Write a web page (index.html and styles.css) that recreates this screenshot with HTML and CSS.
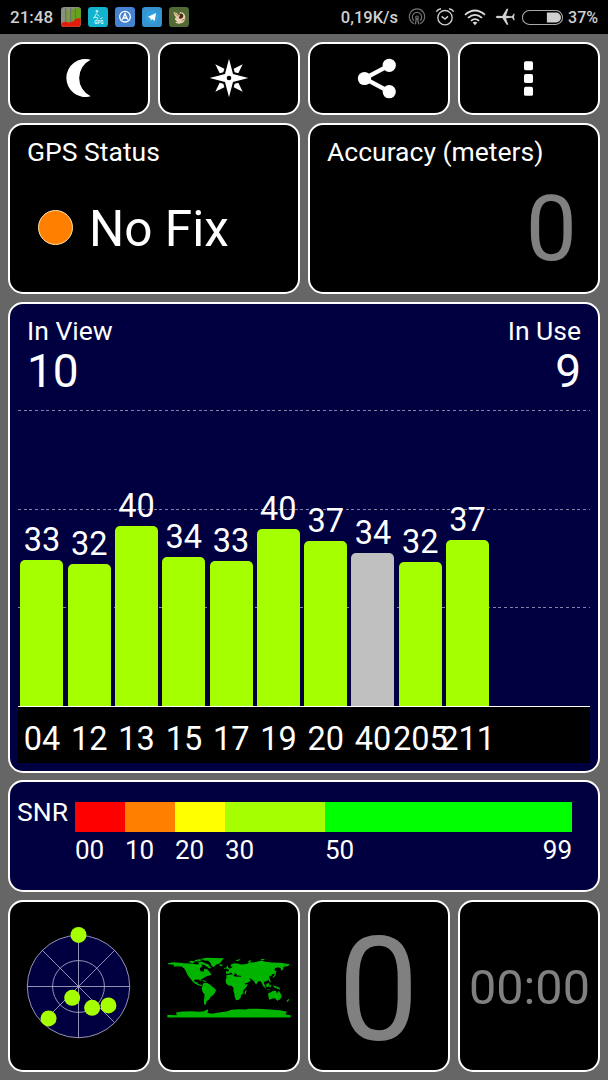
FILE: index.html
```
<!DOCTYPE html>
<html lang="en">
<head>
  <meta charset="UTF-8">
  <meta name="viewport" content="width=device-width, initial-scale=1.0">
  <title>GPS Test</title>
  <link rel="stylesheet" href="styles.css">
</head>
<body>
  <div class="status-bar">
    <div class="status-left">
      <span class="clock">21:48</span>
      <svg class="app-icon" viewBox="0 0 60 60">
        <rect width="60" height="60" rx="10" fill="#8a8f84"/>
        <path d="M15 12h13v38H15z" fill="#7c9a4a"/>
        <path d="M30 6h12v44H30z" fill="#6f9c2c"/>
        <path d="M44 2h8q8 0 8 8v34H44z" fill="#62a31c"/>
        <path d="M14 3v48M29 3v48M43 3v48" stroke="#55614a" stroke-width="2"/>
        <path d="M1 48l12-4 12 3 14-5 4-7 16-1v16q0 9-9 9H10q-8 0-9-8z" fill="#e31b0c"/>
      </svg>
      <svg class="app-icon" viewBox="0 0 60 60">
        <rect width="60" height="60" rx="10" fill="#12b3cf"/>
        <circle cx="27" cy="13" r="4" fill="#bdeef5"/>
        <path d="M25 19l-5 11 10 3-4 7M25 20l9 8M15 34l8-4M36 36l8-4" fill="none" stroke="#bdeef5" stroke-width="3"/>
        <text x="19" y="52" class="tiny-text">GPS</text>
      </svg>
      <svg class="app-icon" viewBox="0 0 60 60">
        <rect width="60" height="60" rx="10" fill="#4583d2"/>
        <circle cx="30" cy="29" r="16" fill="none" stroke="#fff" stroke-width="4"/>
        <path d="M22 38l8-18 8 18M24 33h12" fill="none" stroke="#fff" stroke-width="4"/>
      </svg>
      <svg class="app-icon" viewBox="0 0 60 60">
        <rect width="60" height="60" rx="10" fill="#3693d0"/>
        <circle cx="30" cy="30" r="20" fill="#2f9fe0"/>
        <path d="M17 30l25-12-4 24-8-6-4 5-1-8z" fill="#fff"/>
      </svg>
      <svg class="app-icon" viewBox="0 0 60 60">
        <rect width="60" height="60" rx="10" fill="#526b35"/>
        <path d="M13 15l9 2 8 9 3-10q14-1 16 15 0 14-12 18-12 3-19-3l8-2q-9-3-8-12l5 2q-8-8-10-19z" fill="#e9d3b4"/>
        <path d="M32 20q10-3 11 6-1 10-11 9-5-3 0-8z" fill="#4a2c1c"/>
        <path d="M16 17l11 11M38 42l9-7" stroke="#c06a2a" stroke-width="3"/>
      </svg>
    </div>
    <div class="status-right">
      <span class="speed">0,19K/s</span>
      <svg class="icon-hotspot" viewBox="0 0 54 54" fill="none" stroke="#707070" stroke-width="3.5">
        <path d="M18 47A23 23 0 1 1 36 47M18 38A14 14 0 1 1 36 38"/>
        <path d="M22 49l3-17h4l3 17" stroke-width="4"/>
        <circle cx="27" cy="28" r="4"/>
      </svg>
      <svg class="icon-alarm" viewBox="0 0 60 60" fill="none" stroke="#d0d0d0" stroke-width="4">
        <circle cx="30" cy="32" r="21.500"/>
        <path d="M4 14Q9 6 18 5M42 5Q51 6 56 14M20 28l10 8 9-8" stroke-width="4.500"/>
      </svg>
      <svg class="icon-wifi" viewBox="0 0 66 50" fill="none" stroke="#dcdcdc" stroke-width="5.500">
        <path d="M3 17Q33-9 63 17M12 26Q33 8 54 26M21 35Q33 25 45 35"/>
        <path d="M26 40q7-5 14 0l-7 8z" fill="#dcdcdc" stroke="none"/>
      </svg>
      <svg class="icon-plane" viewBox="0 0 60 54" fill="#d0d0d0">
        <path d="M2 27q1-3 6-3.500L22 24 35 2h5L33 23.500l18 1 5-7h3l-2 9.500 2 9.500h-3l-5-7-18 1 7 20h-5L22 30 8 30.500Q3 30 2 27z"/>
      </svg>
      <svg class="icon-battery" viewBox="0 0 122 44">
        <rect x="1.500" y="1.500" width="119" height="41" rx="20" fill="none" stroke="#aaa" stroke-width="3"/>
        <path d="M74 7h27a15 15 0 0 1 0 30H74z" fill="#d0d0d0"/>
      </svg>
      <span class="battery-text">37%</span>
    </div>
  </div>

  <div class="container">
    <!-- Toolbar -->
    <div class="row toolbar">
      <div class="panel">
        <svg class="icon-moon" viewBox="196 178 76 115"><path d="M271 180A57.800 57.800 0 1 0 271 291A61.500 61.500 0 0 1 271 180z" fill="#fff"/></svg>
      </div>
      <div class="panel">
        <svg class="icon-compass" viewBox="-60 -60 120 120">
          <path d="M0-58L12-12 58 0 12 12 0 58-12 12-58 0-12-12z" fill="#fff"/>
          <g fill="#fff">
            <path id="ray" d="M41-41L28-14 17-17 14-28z"/>
            <use href="#ray" transform="rotate(90)"/>
            <use href="#ray" transform="rotate(180)"/>
            <use href="#ray" transform="rotate(270)"/>
          </g>
          <circle r="7" fill="#000"/>
        </svg>
      </div>
      <div class="panel">
        <svg class="icon-share" viewBox="156 172 120 124" fill="#fff">
          <path d="M253 194L178 234 253 274" fill="none" stroke="#fff" stroke-width="13"/>
          <circle cx="253" cy="194" r="20"/><circle cx="178" cy="234" r="20"/><circle cx="253" cy="274" r="20"/>
        </svg>
      </div>
      <div class="panel">
        <svg class="icon-menu" viewBox="0 0 27 105" fill="#fff">
          <rect width="27" height="27" y="0.500" rx="5"/><rect width="27" height="27" y="39" rx="5"/><rect width="27" height="27" y="77.500" rx="5"/>
        </svg>
      </div>
    </div>

    <!-- Fix status -->
    <div class="row fix">
      <div class="panel fix-panel">
        <div class="label">GPS Status</div>
        <div class="fix-state">
          <span class="fix-dot"></span>
          <span class="fix-text">No Fix</span>
        </div>
      </div>
      <div class="panel fix-panel">
        <div class="label">Accuracy (meters)</div>
        <div class="accuracy-value">0</div>
      </div>
    </div>

    <!-- Satellite signal chart -->
    <div class="panel satellites">
      <div class="sat-header">
        <div>
          <div class="label">In View</div>
          <div class="count">10</div>
        </div>
        <div class="in-use">
          <div class="label">In Use</div>
          <div class="count">9</div>
        </div>
      </div>
      <div class="chart">
        <div class="bar-col"><span>33</span><div class="bar" style="height: 146.5px"></div></div>
        <div class="bar-col"><span>32</span><div class="bar" style="height: 142.5px"></div></div>
        <div class="bar-col"><span>40</span><div class="bar" style="height: 180.5px"></div></div>
        <div class="bar-col"><span>34</span><div class="bar" style="height: 149px"></div></div>
        <div class="bar-col"><span>33</span><div class="bar" style="height: 145px"></div></div>
        <div class="bar-col"><span>40</span><div class="bar" style="height: 177px"></div></div>
        <div class="bar-col"><span>37</span><div class="bar" style="height: 165px"></div></div>
        <div class="bar-col"><span>34</span><div class="bar unused" style="height: 153px"></div></div>
        <div class="bar-col"><span>32</span><div class="bar" style="height: 144px"></div></div>
        <div class="bar-col"><span>37</span><div class="bar" style="height: 166.5px"></div></div>
      </div>
      <div class="sat-ids">
        <span>04</span><span>12</span><span>13</span><span>15</span><span>17</span><span>19</span><span>20</span><span>40</span><span>205</span><span>211</span>
      </div>
    </div>

    <!-- SNR scale -->
    <div class="panel snr">
      <div class="snr-label">SNR</div>
      <div class="scale">
        <div class="scale-part red"><span>00</span></div>
        <div class="scale-part orange"><span>10</span></div>
        <div class="scale-part yellow"><span>20</span></div>
        <div class="scale-part lime"><span>30</span></div>
        <div class="scale-part green"><span>50</span><span>99</span></div>
      </div>
    </div>

    <!-- Page thumbnails -->
    <div class="row thumbs">
      <div class="panel">
        <svg class="sky" viewBox="-160 -182 320 364">
          <g fill="#000040" stroke="#b4b0d0" stroke-width="2.500">
            <circle r="154"/>
            <circle r="78"/>
            <path d="M-154 0H154M0-154V154M-109-109L109 109M109-109L-109 109"/>
          </g>
          <g fill="#a6ff00">
            <circle cx="0" cy="-155" r="24"/>
            <circle cx="-19" cy="34" r="24"/>
            <circle cx="41" cy="64" r="24"/>
            <circle cx="90" cy="57" r="24"/>
            <circle cx="-90" cy="96" r="24"/>
          </g>
        </svg>
      </div>
      <div class="panel">
        <svg class="world" viewBox="500 185 372 182" fill="#00b400">
          <!-- North and South America -->
          <path d="M503 203L518 200 530 201 550 203 575 204 590 207 603 205 606 212 598 219 601 227 610 229 612 220 622 222 628 230 634 238 624 241 617 243 609 248 602 252 600 258 596 252 583 252 582 258 588 261 592 257 591 263 597 266 605 269 604 272 594 269 583 264 576 257 570 249 563 241 558 230 552 219 543 213 530 212 520 214 521 208 503 206z"/>
          <path d="M608 264L615 261 624 264 632 270 640 277 647 283 644 292 638 299 631 304 626 312 619 317 616 328 611 326 611 314 613 298 606 288 604 278z"/>
          <!-- Arctic islands and Greenland -->
          <path d="M564 199l10-3 12 3-10 4zM582 194l14-3 10 1-8 5-12 1zM592 201l12-3 10 5 10 3 5 8 5 3-7 2-8-6-9-5-12-2zM602 190l18-3 50 1-5 7-6 8-11 4-8 8-7-4-2-8-7-7-12-1zM603 254l9 1 7 4-8 0zM655 208l9-2 4 3-6 3z"/>
          <!-- Europe and Asia -->
          <path d="M677 235L677 227 686 227 684 221 694 217 697 212 690 213 692 207 702 203 712 204 722 207 732 206 742 205 746 200 758 201 768 199 785 195 795 199 815 201 840 202 869 206 862 212 850 214 848 222 842 226 841 218 834 215 824 218 822 224 829 227 824 234 815 236 812 243 806 240 808 248 803 255 792 258 790 263 795 270 790 274 786 266 782 258 774 257 767 268 761 257 752 250 745 249 752 254 742 262 731 265 721 249 722 241 710 240 708 235 702 232 704 238 698 238 692 231 686 235z"/>
          <path d="M677 217l4-8 3 7 3 4-8 2zM670 218l5-2-1 5zM705 195l12-4 4 2-10 4zM742 198l12-5-6 8zM780 192l8-2 6 3-10 1zM824 229l3-1-1 11-5 6-6 2 7-8z"/>
          <!-- Africa -->
          <path d="M677 240l13-3 9 0 2 5 9 2 10-1 2 4 6 12 7 8 8-1-6 10-8 8 0 9-7 6-1 8-6 6-8 1-4-10-1-9-3-9 1-8-6-7-10-1-7-7-1-10 3-7zM735 285l4-1-3 13-4-1z"/>
          <!-- Indonesia and Australia -->
          <path d="M784 262l8 8 6 9-5-2zM797 268l7-6 3 4-3 9-6-1zM798 281l13 2-5 1zM806 269l6-1-1 8-4-1zM804 249l4 1 4 12-6-5zM818 269l9 3 10 5 3 6-9-3-10-5zM803 294l8-4 8-4 7 0 2 5 5 1 2-7 4 7 4 6 0 8-5 7-8 1-7-6-9 2-8 3zM829 313h5l-2 4zM859 315l8-6-1 5-6 6z"/>
          <!-- Antarctica -->
          <path d="M501 366v-8l28 1-2-8 20-3 28-1 22 2 14-2 10-6 3 4-3 7 14 3 20-4 24-3 14-5 22-2 20 1 12-2 24 0 28 1 18 2 22 1 20 4-3 9 15 2v7z"/>
        </svg>
      </div>
      <div class="panel">
        <span class="speed-value">0</span>
      </div>
      <div class="panel">
        <span class="time-value">00:00</span>
      </div>
    </div>
  </div>
</body>
</html>
```
FILE: styles.css
```
* {
  box-sizing: border-box;
}

body {
  margin: 0;
  background: #666;
  color: #fff;
  font-family: Roboto, "Liberation Sans", sans-serif;
}

svg {
  display: block;
  flex: none;
}

/* Status Bar */
.status-bar {
  height: 34px;
  padding: 0 10px 0 10px;
  background: #000;
  color: #d0d0d0;
  display: flex;
  justify-content: space-between;
  align-items: center;
  font-size: 16px;
  font-weight: 500;
}

.status-left,
.status-right {
  display: flex;
  align-items: center;
}

.status-left {
  gap: 7px;
}

.clock {
  width: 44px;
  font-size: 17px;
}

.speed {
  font-size: 16.5px;
}

.app-icon {
  width: 20px;
  height: 20px;
}

.tiny-text {
  font-size: 14px;
  font-weight: 700;
  fill: #e0f8fb;
}

.icon-hotspot {
  width: 18px;
  height: 18px;
  margin-left: 10px;
}

.icon-alarm {
  width: 20px;
  height: 20px;
  margin-left: 9px;
}

.icon-wifi {
  width: 22px;
  height: 17px;
  margin-left: 9px;
}

.icon-plane {
  width: 20px;
  height: 18px;
  margin-left: 9px;
}

.icon-battery {
  width: 41px;
  height: 15px;
  margin: 0 5px 0 7px;
}

/* Panels */
.container {
  padding: 8px;
  display: flex;
  flex-direction: column;
  gap: 8px;
}

.row {
  display: flex;
  gap: 8px;
}

.row .panel {
  flex: 1;
}

.panel {
  background: #000;
  border: 2px solid #fff;
  border-radius: 15px;
}

.toolbar .panel,
.thumbs .panel {
  display: flex;
  justify-content: center;
  align-items: center;
}

.toolbar {
  height: 73px;
}

.toolbar .panel {
  padding: 0 1px 1px 0;
}

.icon-moon {
  width: 25px;
  height: 38px;
  margin-right: 1px;
}

.icon-compass {
  width: 40px;
  height: 40px;
}

.icon-share {
  width: 40px;
  height: 41px;
  margin-right: 4px;
}

.icon-menu {
  width: 9px;
  height: 35px;
}

.label {
  font-size: 26.5px;
  line-height: 30px;
}

/* Fix Status */
.fix {
  height: 171px;
}

.fix-panel {
  padding: 12px 18px 0 17px;
}

.fix-state {
  display: flex;
  align-items: center;
  gap: 16px;
  padding: 32px 0 0 11px;
}

.fix-dot {
  width: 35px;
  height: 35px;
  margin-bottom: 2px;
  border-radius: 50%;
  background: #ff8000;
  border: 1px solid #ffe0b0;
}

.fix-text {
  font-size: 49.5px;
  line-height: 58px;
  padding-top: 1px;
}

.accuracy-value {
  color: #808080;
  font-size: 91px;
  line-height: 92px;
  text-align: right;
  padding: 16px 3px 0 0;
}

/* Satellite Chart */
.satellites {
  height: 471px;
  margin-bottom: -1px;
  padding: 12px 8px 0;
  background: #000040;
}

.sat-header {
  height: 90px;
  padding: 0 9px;
  display: flex;
  justify-content: space-between;
}

.in-use {
  text-align: right;
}

.count {
  font-size: 46px;
  line-height: 50px;
}

.chart {
  height: 301px;
  padding-left: 2.4px;
  display: flex;
  align-items: flex-end;
  gap: 4.3px;
  border-bottom: 1px solid #fff;
  background-image:
    repeating-linear-gradient(90deg, #8682a8 0 3px, transparent 3px 5.65px),
    repeating-linear-gradient(90deg, #8682a8 0 3px, transparent 3px 5.65px),
    repeating-linear-gradient(90deg, #8682a8 0 3px, transparent 3px 5.65px);
  background-size: 100% 1px;
  background-position: 0 4px, 0 103px, 0 201px;
  background-repeat: no-repeat;
}

.bar-col {
  width: 43px;
  text-align: center;
  font-size: 32.5px;
  line-height: 32px;
}

.bar {
  margin-top: 4px;
  background: #a6ff00;
  border-radius: 5px 5px 0 0;
}

.bar.unused {
  background: #c0c0c0;
}

.sat-ids {
  height: 56px;
  padding: 13px 0 0 2.5px;
  background: #000;
  display: flex;
  gap: 4.3px;
  font-size: 32.5px;
  line-height: 38px;
}

.sat-ids span {
  width: 43px;
  display: flex;
  justify-content: center;
}

/* SNR Scale */
.snr {
  height: 112px;
  padding: 20px 26px 0 7px;
  background: #000040;
  display: flex;
  font-size: 26px;
  line-height: 30px;
}

.snr-label {
  width: 58px;
  margin-top: -5px;
  font-size: 26.5px;
}

.scale {
  flex: 1;
  display: flex;
}

.scale-part {
  width: 50px;
  height: 30px;
  padding-top: 33px;
  display: flex;
  justify-content: space-between;
}

.red {
  background: linear-gradient(#ff0000, #ff0000) 0 0 / 100% 30px no-repeat;
}

.orange {
  background: linear-gradient(#ff8000, #ff8000) 0 0 / 100% 30px no-repeat;
}

.yellow {
  background: linear-gradient(#ffff00, #ffff00) 0 0 / 100% 30px no-repeat;
}

.lime {
  width: 100px;
  background: linear-gradient(#a6ff00, #a6ff00) 0 0 / 100% 30px no-repeat;
}

.green {
  flex: 1;
  background: linear-gradient(#00ff00, #00ff00) 0 0 / 100% 30px no-repeat;
}

/* Thumbnails */
.thumbs {
  height: 172px;
}

.thumbs .panel {
  padding-right: 1px;
}

.sky {
  width: 107px;
  height: 121px;
}

.world {
  width: 124px;
  height: 61px;
  margin-top: 2px;
}

.speed-value {
  color: #808080;
  font-size: 144px;
  line-height: 146px;
  padding-top: 9px;
}

.time-value {
  color: #808080;
  font-size: 48.5px;
  padding: 2px 0 0 2px;
}
```
